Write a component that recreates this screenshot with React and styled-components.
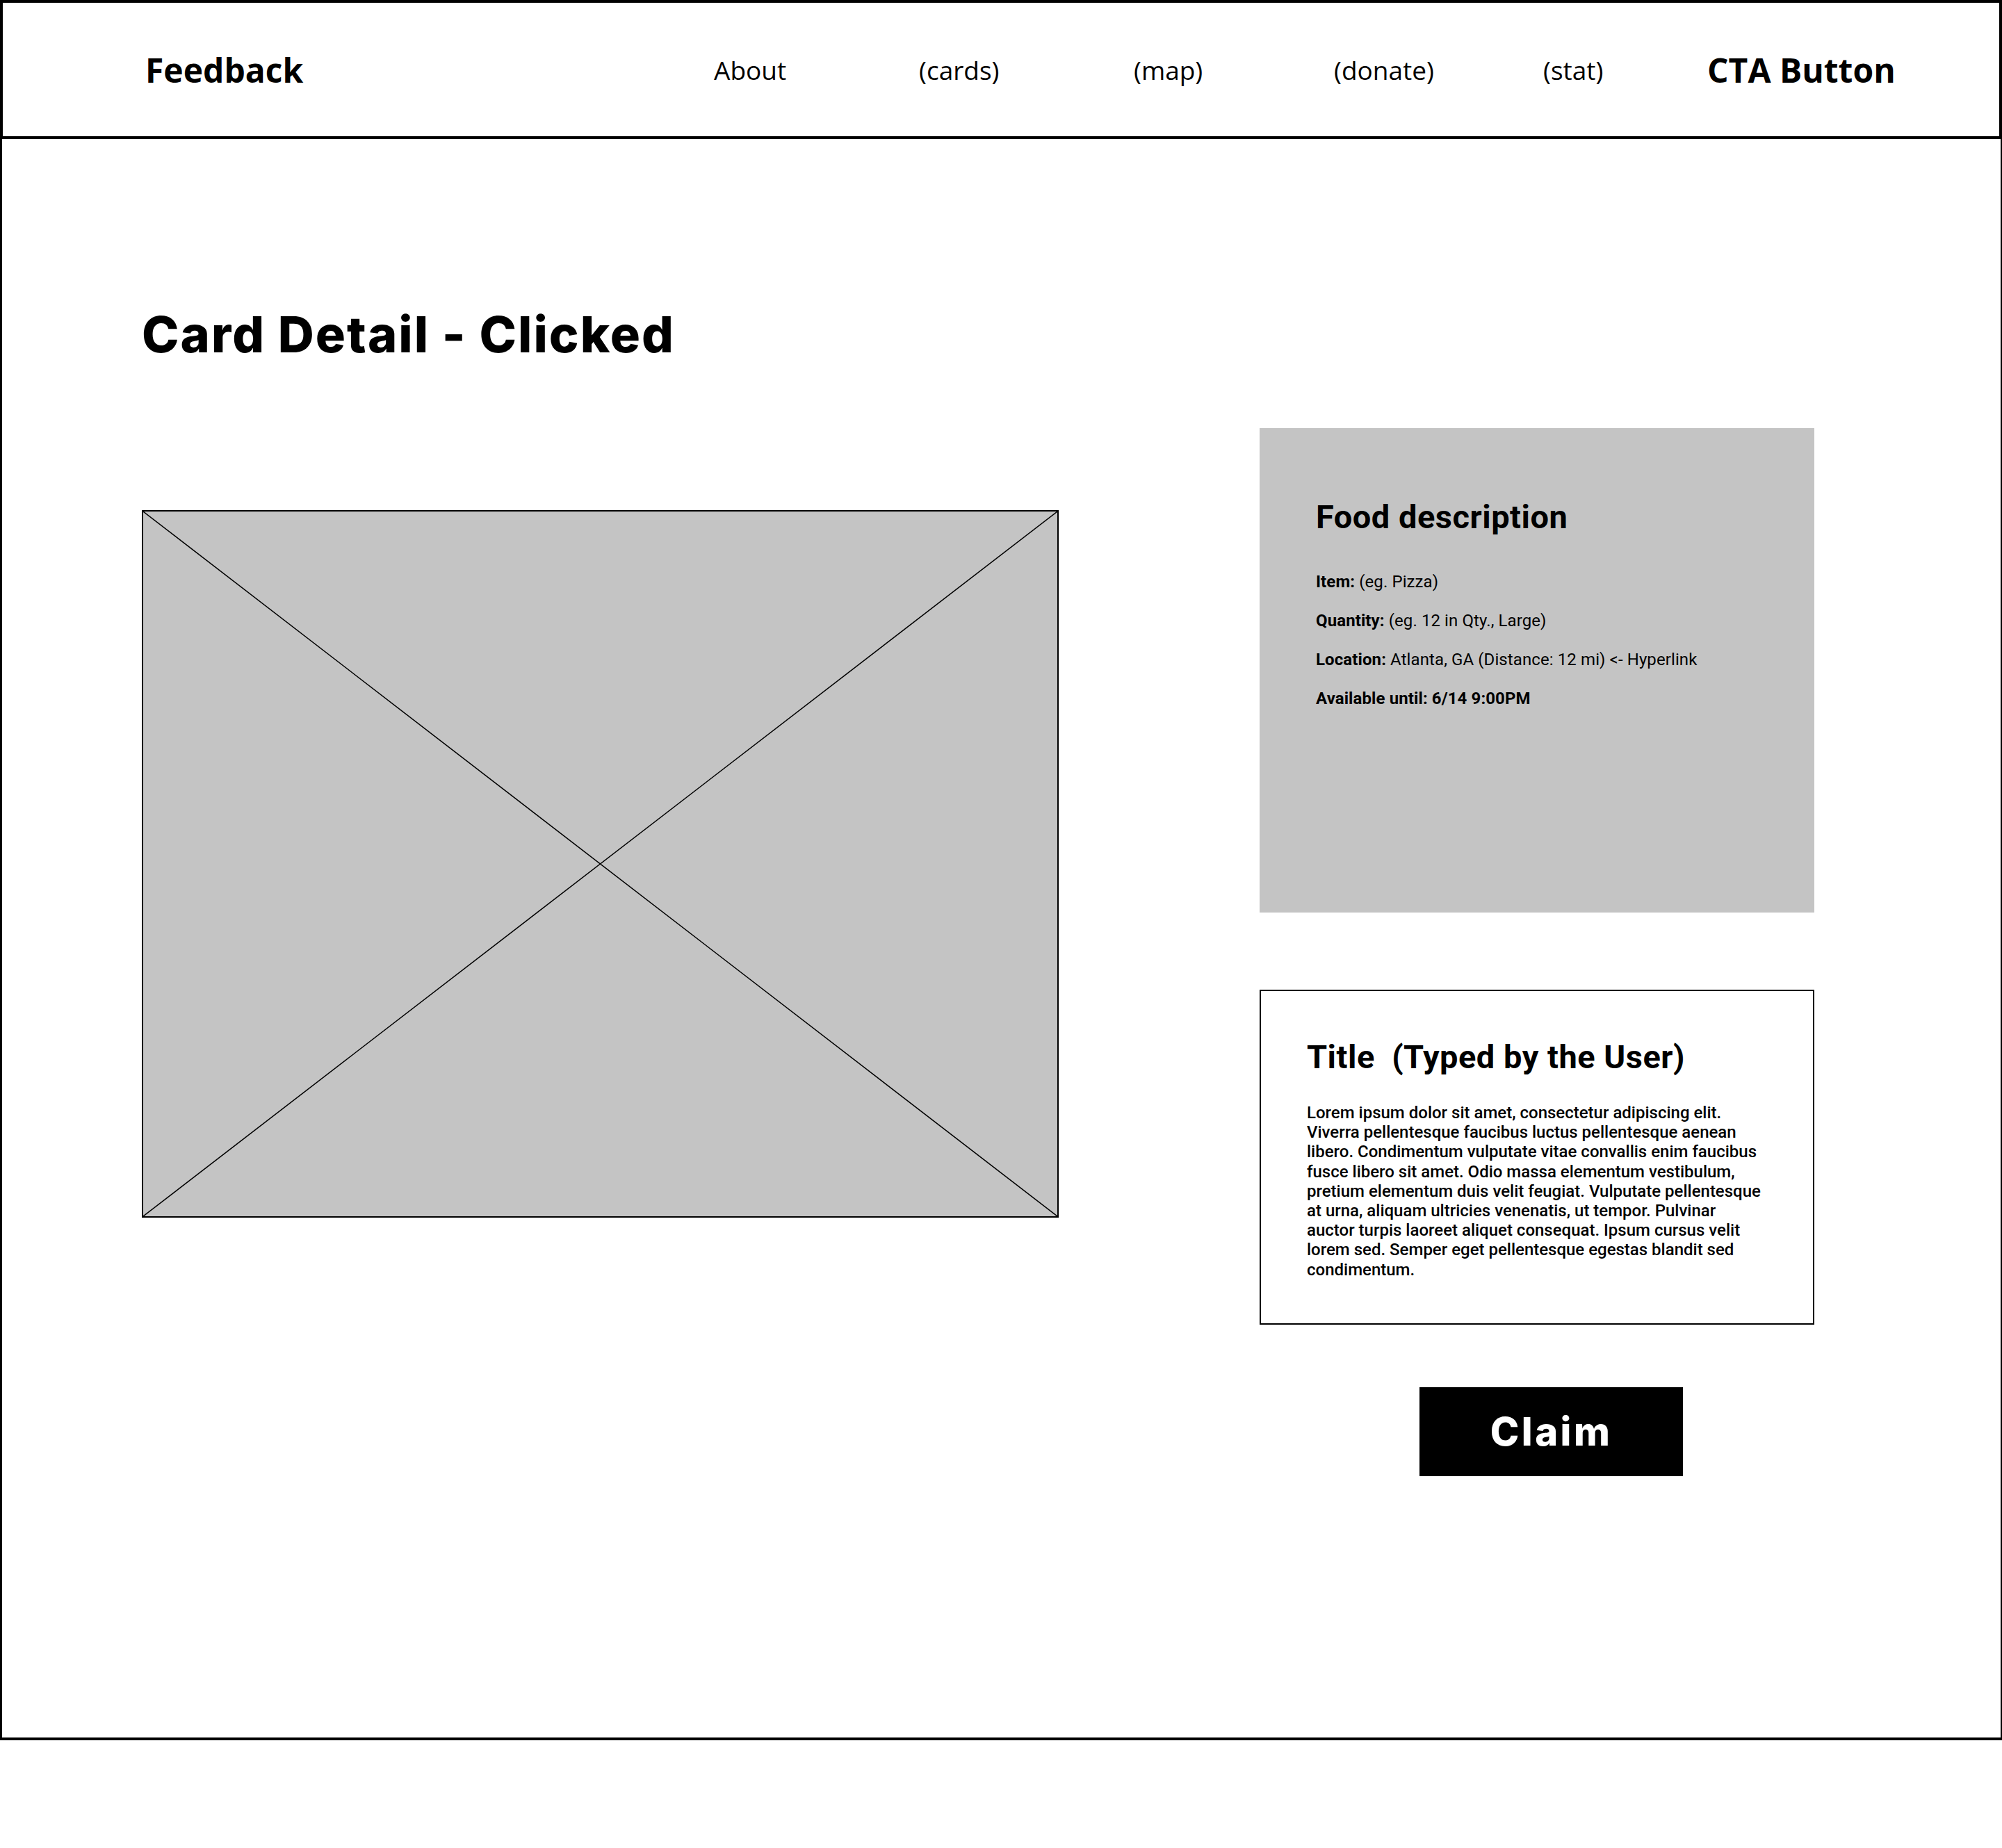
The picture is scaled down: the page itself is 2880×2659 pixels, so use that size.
import styled, { createGlobalStyle } from "styled-components";

const GlobalStyle = createGlobalStyle`
  html, body {
    margin: 0;
    padding: 0;
    background: #fff;
  }
  body {
    font-family: Roboto, "Liberation Sans", sans-serif;
    color: #000;
  }
`;

const Page = styled.div`
  width: 2880px;
`;

const Header = styled.header`
  height: 200px;
  box-sizing: border-box;
  border: 4px solid #000;
  display: flex;
  align-items: center;
  padding-left: 205px;
  font-family: "Open Sans", "Liberation Sans", sans-serif;
`;

const Brand = styled.div`
  width: 818px;
  font-size: 48px;
  font-weight: 700;
`;

const Nav = styled.nav`
  display: grid;
  grid-template-columns: 295px 309px 288px 301px 236px auto;
  align-items: center;
`;

const NavLink = styled.a`
  font-size: ${({ $cta }) => ($cta ? "48px" : "37px")};
  font-weight: ${({ $cta }) => ($cta ? 700 : 400)};
  color: #000;
  text-decoration: none;
  white-space: nowrap;
`;

const Main = styled.main`
  height: 2304px;
  box-sizing: border-box;
  border: solid #000;
  border-width: 0 2px 4px 3px;
  padding: 245px 0 0 201px;
`;

const PageTitle = styled.h1`
  margin: 0;
  font-family: Inter, "Liberation Sans", sans-serif;
  font-size: 72px;
  font-weight: 800;
  line-height: 1;
  letter-spacing: 2px;
`;

const Columns = styled.div`
  display: grid;
  grid-template-columns: 1319px 798px;
  column-gap: 289px;
  margin-top: 99px;
  align-items: start;
`;

const ImageBox = styled.div`
  margin-top: 118px;
  height: 1018px;
  box-sizing: border-box;
  border: 2px solid #000;
  background: #c4c4c4;

  svg {
    display: block;
    width: 100%;
    height: 100%;
  }
`;

const Side = styled.div`
  display: flex;
  flex-direction: column;
`;

const InfoPanel = styled.section`
  height: 697px;
  box-sizing: border-box;
  background: #c4c4c4;
  padding: 104px 30px 0 81px;
`;

const PanelHeading = styled.h2`
  margin: 0;
  font-size: 47px;
  font-weight: 700;
  line-height: 1;
  letter-spacing: 0.5px;
`;

const InfoList = styled.div`
  margin-top: 42px;
`;

const InfoLine = styled.p`
  margin: 0;
  font-size: 24px;
  line-height: 56px;
  font-weight: ${({ $bold }) => ($bold ? 700 : 400)};
  letter-spacing: 0.1px;

  b {
    font-weight: 700;
  }
`;

const StoryBox = styled.section`
  margin-top: 111px;
  height: 482px;
  box-sizing: border-box;
  border: 2px solid #000;
  padding: 71px 30px 0 66px;
`;

const StoryText = styled.p`
  margin: 43px 0 0;
  width: 658px;
  font-size: 24px;
  font-weight: 500;
  line-height: 28.2px;
`;

const ClaimButton = styled.button`
  margin: 90px 0 0 230px;
  width: 379px;
  height: 128px;
  border: none;
  background: #000;
  color: #fff;
  display: flex;
  align-items: center;
  justify-content: center;
  font-family: Inter, "Liberation Sans", sans-serif;
  font-size: 56px;
  font-weight: 800;
  letter-spacing: 3.5px;
  cursor: pointer;
`;

const navItems = ["About", "(cards)", "(map)", "(donate)", "(stat)"];

export default function App() {
  return (
    <Page>
      <GlobalStyle />
      <Header>
        <Brand>Feedback</Brand>
        <Nav>
          {navItems.map((item) => (
            <NavLink key={item} href="#">
              {item}
            </NavLink>
          ))}
          <NavLink $cta href="#">
            CTA Button
          </NavLink>
        </Nav>
      </Header>

      <Main>
        <PageTitle>Card Detail - Clicked</PageTitle>
        <Columns>
          <ImageBox>
            {/* image placeholder cross */}
            <svg viewBox="0 0 100 100" preserveAspectRatio="none">
              <line x1="0" y1="0" x2="100" y2="100" stroke="#000" strokeWidth="1.5" vectorEffect="non-scaling-stroke" />
              <line x1="100" y1="0" x2="0" y2="100" stroke="#000" strokeWidth="1.5" vectorEffect="non-scaling-stroke" />
            </svg>
          </ImageBox>

          <Side>
            <InfoPanel>
              <PanelHeading>Food description</PanelHeading>
              <InfoList>
                <InfoLine>
                  <b>Item:</b> (eg. Pizza)
                </InfoLine>
                <InfoLine>
                  <b>Quantity:</b> (eg. 12 in Qty., Large)
                </InfoLine>
                <InfoLine>
                  <b>Location:</b> Atlanta, GA (Distance: 12 mi) &lt;- Hyperlink
                </InfoLine>
                <InfoLine $bold>Available until: 6/14 9:00PM</InfoLine>
              </InfoList>
            </InfoPanel>

            <StoryBox>
              <PanelHeading>Title&nbsp; (Typed by the User)</PanelHeading>
              <StoryText>
                Lorem ipsum dolor sit amet, consectetur adipiscing elit. Viverra pellentesque faucibus luctus
                pellentesque aenean libero. Condimentum vulputate vitae convallis enim faucibus fusce libero sit
                amet. Odio massa elementum vestibulum, pretium elementum duis velit feugiat. Vulputate pellentesque
                at urna, aliquam ultricies venenatis, ut tempor. Pulvinar auctor turpis laoreet aliquet consequat.
                Ipsum cursus velit lorem sed. Semper eget pellentesque egestas blandit sed condimentum.
              </StoryText>
            </StoryBox>

            <ClaimButton>Claim</ClaimButton>
          </Side>
        </Columns>
      </Main>
    </Page>
  );
}
